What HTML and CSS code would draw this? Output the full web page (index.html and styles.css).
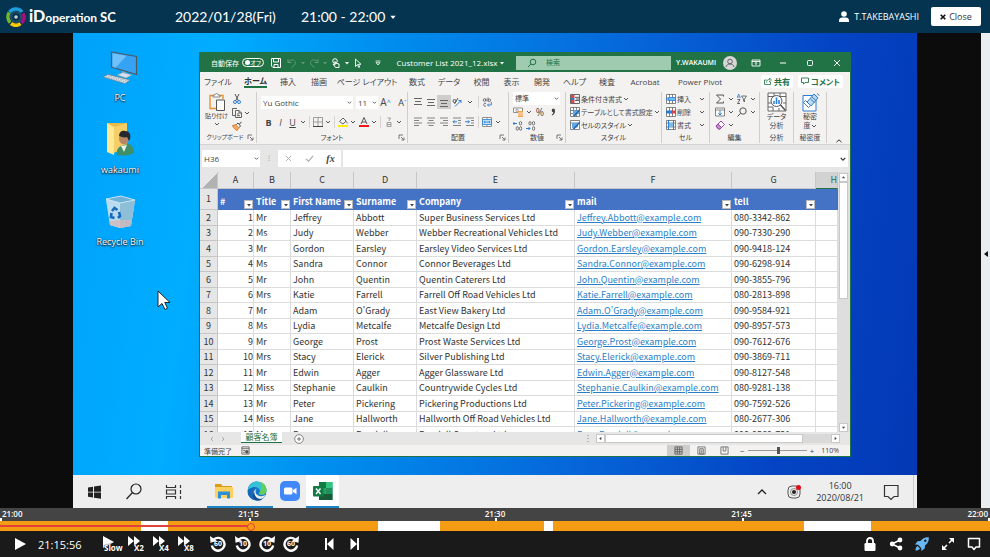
FILE: index.html
```html
<!DOCTYPE html>
<html lang="ja">
<head>
<meta charset="utf-8">
<title>iDoperation SC</title>
<link rel="stylesheet" href="styles.css">
</head>
<body>
<svg class="defs" aria-hidden="true">
  <symbol id="caret" viewBox="0 0 6 6"><path d="M1 2l2 2 2-2" fill="none" stroke="#555" stroke-width="1"/></symbol>
  <symbol id="launch" viewBox="0 0 7 7"><path d="M1 5V1h4M3 3l3 3M6 3.500V6H3.500" fill="none" stroke="#666" stroke-width=".9"/></symbol>
  <symbol id="tri" viewBox="0 0 6 6"><path d="M1 2h4L3 4.500z" fill="currentColor"/></symbol>
  <symbol id="rew" viewBox="0 0 16 16"><path d="M3.700 3.600A6.400 6.400 0 1 1 1.800 9.500" fill="none" stroke="#fff" stroke-width="2.400"/><path d="M0 0l.5 6.800L7 5z" fill="#fff"/></symbol>
  <symbol id="ffw" viewBox="0 0 12 12"><path d="M0 0l6 5-6 5zM6 0l6 5-6 5z" fill="#fff"/></symbol>
</svg>

<header class="appbar">
  <div class="brand">
    <svg viewBox="0 0 20 20" class="brand-mark" aria-hidden="true">
      <g fill="none" stroke-width="3.600"><path d="M3.500 5.200A8 8 0 0 1 12 2.300" stroke="#1da0dc"/><path d="M12 2.300A8 8 0 0 1 16 5" stroke="#1da0dc"/><path d="M17 6.500A8 8 0 0 1 15.500 16" stroke="#a4117f"/><path d="M14.500 16.600A8 8 0 0 1 5 16.500" stroke="#fcc800"/><path d="M4.200 15.500A8 8 0 0 1 3.300 5.600" stroke="#6fb92c"/></g>
      <circle cx="10" cy="10" r="5" fill="none" stroke="#1d4c66" stroke-width="2.500"/><circle cx="10" cy="10" r="1.800" fill="#c5d0d8"/>
    </svg>
    <h1><b>iD</b>operation <span>SC</span></h1>
  </div>
  <span class="when">2022/01/28(Fri)</span>
  <button class="range">21:00 - 22:00 <svg viewBox="0 0 6 6"><use href="#tri"/></svg></button>
  <div class="account">
    <svg viewBox="0 0 10 11" aria-hidden="true"><circle cx="5" cy="3" r="2.800" fill="#fff"/><path d="M0 11V9.500C0 7.500 1.500 6.500 3 6.500h4c1.500 0 3 1 3 3V11z" fill="#fff"/></svg>
    <span>T.TAKEBAYASHI</span>
    <button class="close"><svg viewBox="0 0 6 6" aria-hidden="true"><path d="M.7.7l4.600 4.600M5.300.7L.7 5.300" stroke="#111" stroke-width="1.600"/></svg>Close</button>
  </div>
</header>

<main class="stage">
  <section class="desktop">
    <div class="wallpaper">
      <ul class="shortcuts">
        <li><svg viewBox="0 0 36 36"><path d="M9.500 2l25 4.500v18L9.500 17z" fill="#35a2f4" stroke="#4d5a66" stroke-width="1.200"/><path d="M10.500 3.300l14 2.500-11 12-3-1z" fill="#6fc0fb"/><path d="M20 21l4 1.200v3l-4-1z" fill="#8da0ae"/><path d="M15 25l6-2.500 9 2.500-6 3z" fill="#d5e0e8" stroke="#8393a0" stroke-width=".5"/><path d="M1 27l5-2.500 22 5.500-5 3.500z" fill="#dde4ea" stroke="#71808c" stroke-width=".7"/><path d="M4 27l20 5M6 26l20 4.800" stroke="#8795a1" stroke-width=".7" stroke-dasharray="1.500 1"/></svg>PC</li>
        <li><svg viewBox="0 0 36 36"><path d="M5 1h20v29H9z" fill="#e9bb43"/><path d="M5 1l7 4v28l-7-3z" fill="#ffe793"/><path d="M12 5l13-4v20l-13 10z" fill="#f5cf66"/><path d="M15 33c-1-6 2-9 7-10l5-1c3 1 5 4 5 9-5 3-12 3-17 2z" fill="#3f8f68"/><path d="M19 24l3 6 3-7z" fill="#e9f1ea"/><ellipse cx="22" cy="16.500" rx="5" ry="6" fill="#b98663"/><path d="M17 14c0-4 3-6 6-5 5 0 7 5 4 10l-2-4c-3 1-5 0-8-1z" fill="#26282c"/></svg>wakaumi</li>
        <li><svg viewBox="0 0 36 36"><path d="M4 5l15-3 14 4-4 26-11 2-10-3z" fill="#a9d5ee"/><path d="M4 5l14 4 15-3-4 26-11 2-10-3z" fill="#bddcec" opacity=".8"/><path d="M18 9l15-3-4 26-11 2z" fill="#8ebfd9"/><path d="M4 5l15-3 14 4-15 3z" fill="#6fb2d9" stroke="#dbeef7" stroke-width=".8"/><path d="M8 27l10-1 11 0-1 6-10 2-10-3z" fill="#d3b9bb" opacity=".8"/><g fill="none" stroke="#1769bd" stroke-width="2.600"><path d="M10 17l2.500-3 3 2"/><path d="M17 18l1 4-2 2"/><path d="M12.500 24L9 23l.5-4"/></g></svg>Recycle Bin</li>
      </ul>
      <svg class="pointer" viewBox="0 0 14 21" aria-hidden="true"><path d="M1 1v16l4-3.500 3 6 2.500-1.200-2.700-5.800H13z" fill="#fff" stroke="#222" stroke-width="1"/></svg>

      <article class="excel">
        <div class="titlebar">
          <div class="quick">
            <label for="autosave">自動保存</label><span class="switch"><input type="checkbox" id="autosave"><i>オフ</i></span>
            <button aria-label="保存"><svg viewBox="0 0 10 10"><path d="M.5.500h9v9H2L.5 8zM2.500.500v3.500h5V.5M3 9.500V6.500h4v3" fill="none" stroke="#fff"/></svg></button>
            <div class="quick-grid">
              <button class="dim" aria-label="元に戻す"><svg viewBox="0 0 10 10"><path d="M1 1v3.500h3.500M1 4.500C3 1 8 1 8.500 4.500c0 2-2 3.500-4 5" fill="none" stroke="#5f9a78"/></svg><svg class="c" viewBox="0 0 6 6"><use href="#tri"/></svg></button>
              <button class="dim" aria-label="やり直し"><svg viewBox="0 0 10 10"><path d="M9 1v3.500H5.500M9 4.500C7 1 2 1 1.500 4.500c0 2 2 3.500 4 5" fill="none" stroke="#5f9a78"/></svg><svg class="c" viewBox="0 0 6 6"><use href="#tri"/></svg></button>
              <button aria-label="タッチ"><svg viewBox="0 0 10 10"><circle cx="4" cy="3" r="2.300" fill="none" stroke="#fff"/><path d="M4 3v4l-2-1 2.500 3.500H8V6L4 5" fill="none" stroke="#fff"/></svg><svg class="c" viewBox="0 0 6 6"><use href="#tri"/></svg></button>
              <button aria-label="選択"><svg viewBox="0 0 10 10"><path d="M2.500 1v7.500l2-2 1.200 3 1-.5-1.200-2.700H8z" fill="none" stroke="#fff" stroke-width=".9"/></svg></button>
              <button aria-label="カスタマイズ"><svg class="c" viewBox="0 0 6 6"><path d="M.5 1h5M1 2.700h4L3 5z" fill="none" stroke="#fff" stroke-width=".8"/></svg></button>
            </div>
          </div>
          <button class="docname">Customer List 2021_12.xlsx <svg class="c" viewBox="0 0 6 6"><use href="#tri"/></svg></button>
          <label class="find"><svg viewBox="0 0 10 10"><circle cx="6" cy="4" r="2.800" fill="none" stroke="#217346"/><path d="M4 6L1 9" stroke="#217346"/></svg><input type="search" aria-label="検索" placeholder="検索"></label>
          <div class="who">Y.WAKAUMI<svg viewBox="0 0 14 14"><circle cx="7" cy="7" r="7" fill="#d6d6d6"/><circle cx="7" cy="5.500" r="2.300" fill="none" stroke="#555" stroke-width=".9"/><path d="M3 11c.5-4 7.500-4 8 0" fill="none" stroke="#555" stroke-width=".9"/></svg></div>
          <div class="winbtns">
            <button aria-label="リボンの表示"><svg viewBox="0 0 10 10"><path d="M1 2h8v6H1zM1 3.500h8M5 7V4.500M4 5.500l1-1 1 1" fill="none" stroke="#fff" stroke-width=".9"/></svg></button>
            <button aria-label="最小化"><svg viewBox="0 0 10 10"><path d="M2 5h6" stroke="#fff"/></svg></button>
            <button aria-label="最大化"><svg viewBox="0 0 10 10"><rect x="2.500" y="2.500" width="5" height="5" rx="1" fill="none" stroke="#fff"/></svg></button>
            <button aria-label="閉じる"><svg viewBox="0 0 10 10"><path d="M2 2l6 6M8 2L2 8" stroke="#fff"/></svg></button>
          </div>
        </div>

        <nav class="tabs">
          <a href="#">ファイル</a><a href="#" class="on">ホーム</a><a href="#">挿入</a><a href="#">描画</a><a href="#">ページ レイアウト</a><a href="#">数式</a><a href="#">データ</a><a href="#">校閲</a><a href="#">表示</a><a href="#">開発</a><a href="#">ヘルプ</a><a href="#">検査</a><a href="#">Acrobat</a><a href="#">Power Pivot</a>
          <div class="share">
            <button><svg viewBox="0 0 8 8"><path d="M2.500 3H.5v4.500h6V5M2.500 5.500c0-2 1-3 3-3V1l2 2-2 2V3.800" fill="none" stroke="#217346" stroke-width=".8"/></svg>共有</button>
            <button><svg viewBox="0 0 8 8"><path d="M.5 1h7v4.500H4L2.500 7.200V5.500h-2z" fill="none" stroke="#217346" stroke-width=".9"/></svg>コメント</button>
          </div>
        </nav>

        <div class="ribbon">
          <section class="group">
            <div class="tools clip">
              <button class="tall"><svg viewBox="0 0 16 18"><path d="M4 2.500H1v13h6M11 2.500h3V6" fill="none" stroke="#e8912d" stroke-width="1.400"/><path d="M4 4V2h2c0-2 3-2 3 0h2v2z" fill="#fff" stroke="#777" stroke-width=".9"/><path d="M7.500 7h8v10.500h-8z" fill="#fff" stroke="#555"/></svg>貼り付け<svg class="c" viewBox="0 0 6 6"><use href="#caret"/></svg></button>
              <div class="stack">
                <button aria-label="切り取り"><svg viewBox="0 0 10 10"><path d="M3 0l3.500 7M7 0L3.500 7" stroke="#555" fill="none"/><circle cx="3" cy="8" r="1.500" fill="none" stroke="#2b7cd3"/><circle cx="7" cy="8" r="1.500" fill="none" stroke="#2b7cd3"/></svg></button>
                <button aria-label="コピー"><svg viewBox="0 0 10 10"><path d="M3 7.500H.5v-7H5M3.500 2.500H7l2.500 2.500v4.500h-6zM7 2.500V5h2.500M5 6h2M5 7.700h3" fill="none" stroke="#555" stroke-width=".9"/></svg><svg class="c" viewBox="0 0 6 6"><use href="#caret"/></svg></button>
                <button aria-label="書式のコピー"><svg viewBox="0 0 10 10"><path d="M.5 4.500l4-1 2.500 3-2 3c-1.500-1-3.500-2-4.500-5z" fill="#f8a860" stroke="#d9711c" stroke-width=".9"/><path d="M4.500 3.500L6 2l2.500 3L7 6.500M7.500 3L9.500.8" stroke="#444" fill="#fff"/></svg></button>
              </div>
            </div>
            <h2>クリップボード<svg class="l" viewBox="0 0 7 7"><use href="#launch"/></svg></h2>
          </section>
          <section class="group">
            <div class="tools rows">
              <div class="row pad4"><select class="face" aria-label="フォント"><option>Yu Gothic</option></select><select class="size" aria-label="フォント サイズ"><option>11</option></select><button class="grow">A<sup>^</sup></button><button class="grow small">A<sup>ˇ</sup></button></div>
              <div class="row pad7"><button class="t"><b>B</b></button><button class="t"><em>I</em></button><button class="t"><u>U</u></button><svg class="c" viewBox="0 0 6 6"><use href="#caret"/></svg><i class="bar"></i>
                <button aria-label="罫線"><svg viewBox="0 0 10 10"><path d="M.5.500h9v9h-9zM5 .5v9M.5 5h9" fill="none" stroke="#888" stroke-width=".8"/><path d="M0 9.500h10" stroke="#444"/></svg></button><svg class="c" viewBox="0 0 6 6"><use href="#caret"/></svg><i class="bar"></i>
                <button aria-label="塗りつぶし"><svg viewBox="0 0 10 10"><path d="M1.500 4.500L5 1l3 3-3 3zM8.500 4.500l.8 1.800" fill="none" stroke="#555" stroke-width=".9"/><path d="M0 8h10v2H0z" fill="#ffee00"/></svg></button><svg class="c" viewBox="0 0 6 6"><use href="#caret"/></svg>
                <button aria-label="文字の色"><svg viewBox="0 0 10 10"><path d="M2 7l3-6.500L8 7M3 5h4" fill="none" stroke="#555"/><path d="M0 8h10v2H0z" fill="#f01818"/></svg></button><svg class="c" viewBox="0 0 6 6"><use href="#caret"/></svg><i class="bar"></i>
                <button aria-label="ふりがな"><svg viewBox="0 0 10 10"><path d="M3.500 1h3L5 4M3 5.500h4M3 7.500h4M3 9.500h4M3 5.500v4M7 5.500v4" fill="none" stroke="#888" stroke-width=".8"/></svg></button><svg class="c" viewBox="0 0 6 6"><use href="#caret"/></svg>
              </div>
            </div>
            <h2>フォント<svg class="l" viewBox="0 0 7 7"><use href="#launch"/></svg></h2>
          </section>
          <section class="group">
            <div class="tools rows">
              <div class="row pad5 wide">
                <button aria-label="上揃え"><svg viewBox="0 0 10 10"><path d="M1 1.500h8M2 4.500h6M1 7.500h8" stroke="#666"/></svg></button>
                <button aria-label="上下中央揃え"><svg viewBox="0 0 10 10"><path d="M1 2.500h8M2 5.500h6M1 8.500h8" stroke="#666"/></svg></button>
                <button class="on" aria-label="下揃え"><svg viewBox="0 0 10 10"><path d="M1 3.500h8M2 6.500h6M1 9.500h8" stroke="#666"/></svg></button>
                <button aria-label="方向"><svg viewBox="0 0 10 10"><circle cx="2.500" cy="4" r="1.500" fill="none" stroke="#555"/><path d="M2.500 7L6 1" stroke="#555"/><path d="M3 9.500l6-6M9 6V3.500H6.500" fill="none" stroke="#2b7cd3"/></svg></button>
                <svg class="c w" viewBox="0 0 6 6"><use href="#caret"/></svg><i class="bar"></i>
                <button aria-label="折り返し"><svg viewBox="0 0 10 10"><circle cx="2.500" cy="3" r="1.300" fill="none" stroke="#555" stroke-width=".8"/><path d="M4 1.500v3M6 .5v4" stroke="#555" stroke-width=".8"/><circle cx="7.300" cy="3.300" r="1.300" fill="none" stroke="#555" stroke-width=".8"/><path d="M4 6.500a1.500 1.500 0 1 0 0 2.500" fill="none" stroke="#555" stroke-width=".8"/><path d="M9.300 5v3H5.500M7 6.500L5.500 8 7 9.500" fill="none" stroke="#2b7cd3" stroke-width=".9"/></svg></button>
              </div>
              <div class="row pad5 wide">
                <button aria-label="左揃え"><svg viewBox="0 0 10 10"><path d="M1 1h8M1 3.500h5M1 6h8M1 8.500h5" stroke="#777" stroke-width=".9"/></svg></button>
                <button aria-label="中央揃え"><svg viewBox="0 0 10 10"><path d="M1 1h8M2.500 3.500h5M1 6h8M2.500 8.500h5" stroke="#777" stroke-width=".9"/></svg></button>
                <button aria-label="右揃え"><svg viewBox="0 0 10 10"><path d="M1 1h8M4 3.500h5M1 6h8M4 8.500h5" stroke="#777" stroke-width=".9"/></svg></button>
                <button aria-label="インデントを減らす"><svg viewBox="0 0 10 10"><path d="M1 1h8M6 3.500h3M6 6h3M1 8.500h8" stroke="#777" stroke-width=".9"/><path d="M5 4.800H1M2.500 3.300L1 4.800l1.500 1.500" fill="none" stroke="#2b7cd3"/></svg></button>
                <button aria-label="インデントを増やす"><svg viewBox="0 0 10 10"><path d="M1 1h8M6 3.500h3M6 6h3M1 8.500h8" stroke="#777" stroke-width=".9"/><path d="M0 4.800h4M3 3.300l1.500 1.500L3 6.300" fill="none" stroke="#2b7cd3"/></svg></button>
                <i class="bar"></i>
                <button aria-label="セルを結合"><svg viewBox="0 0 10 10"><path d="M.5.500h9v9h-9zM5 .5v2M5 7.500v2" fill="#fff" stroke="#777" stroke-width=".8"/><path d="M.5 2.500h9v5h-9z" fill="#bfe0f8" stroke="#2b7cd3" stroke-width=".8"/><path d="M2 5h6M3 4L2 5l1 1M7 4l1 1-1 1" fill="none" stroke="#2b7cd3" stroke-width=".8"/></svg></button><svg class="c" viewBox="0 0 6 6"><use href="#caret"/></svg>
              </div>
            </div>
            <h2>配置<svg class="l" viewBox="0 0 7 7"><use href="#launch"/></svg></h2>
          </section>
          <section class="group">
            <div class="tools rows">
              <div class="row pad4"><select class="numfmt" aria-label="表示形式"><option>標準</option></select></div>
              <div class="row pad4 wide"><button aria-label="通貨"><svg viewBox="0 0 10 10"><path d="M.5 1h9v4.500h-9z" fill="#fff" stroke="#777" stroke-width=".8"/><circle cx="4" cy="3.300" r="1.200" fill="none" stroke="#777" stroke-width=".7"/><path d="M5 4h5v6H5z" fill="#f3a04d"/><path d="M5 6h5M5 8h5" stroke="#fff" stroke-width=".7"/></svg></button><svg class="c" viewBox="0 0 6 6"><use href="#caret"/></svg><button class="pct">%</button><button class="pct" aria-label="桁区切り"><svg viewBox="0 0 10 10"><path d="M5 1.500a2 2 0 0 1 2 2.500c0 2-1 3.500-3 4.500l-.3-.7C5 7 5.300 6 5.200 5.300A2 2 0 0 1 5 1.500z" fill="#444"/></svg></button></div>
              <div class="row pad4 wide"><button aria-label="小数点以下を増やす"><svg viewBox="0 0 10 10"><path d="M0 2.500h4M1.500 1L0 2.500 1.500 4" fill="none" stroke="#2b7cd3"/><g fill="none" stroke="#555" stroke-width=".8"><ellipse cx="7.500" cy="2.300" rx="1.200" ry="1.700"/><ellipse cx="4.300" cy="7.500" rx="1.100" ry="1.800"/><ellipse cx="7.600" cy="7.500" rx="1.100" ry="1.800"/></g></svg></button><button aria-label="小数点以下を減らす"><svg viewBox="0 0 10 10"><path d="M0 7.500h4M2.500 6L4 7.500 2.500 9" fill="none" stroke="#2b7cd3"/><g fill="none" stroke="#555" stroke-width=".8"><ellipse cx="4" cy="2.300" rx="1.100" ry="1.700"/><ellipse cx="7.500" cy="2.300" rx="1.200" ry="1.700"/><ellipse cx="7.600" cy="7.500" rx="1.100" ry="1.800"/></g></svg></button></div>
            </div>
            <h2>数値<svg class="l" viewBox="0 0 7 7"><use href="#launch"/></svg></h2>
          </section>
          <section class="group">
            <div class="tools rows text">
              <button><svg viewBox="0 0 10 10"><path d="M.5.500h9v9h-9z" fill="#fff" stroke="#666"/><path d="M1 1h3.500v3H1zM1 6h3.500v3H1z" fill="#e0454e"/><path d="M1 4h3.500v2H1z" fill="#2b7cd3"/><path d="M5 3.300h4M5 6.500h4M6 5h3" stroke="#444" stroke-width=".9"/></svg>条件付き書式<svg class="c" viewBox="0 0 6 6"><use href="#caret"/></svg></button>
              <button><svg viewBox="0 0 10 10"><path d="M.5.500h9v9h-9zM3.500.500v9M6.500.500v9M.5 3.500h9M.5 6.500h9" fill="#fff" stroke="#666" stroke-width=".8"/><path d="M3 3.500h6v3L5 9 3 8z" fill="#61a9e6"/><path d="M4 9l5.500-6" stroke="#2467a8" stroke-width="1.400"/></svg>テーブルとして書式設定<svg class="c" viewBox="0 0 6 6"><use href="#caret"/></svg></button>
              <button><svg viewBox="0 0 10 10"><path d="M.5.500h9v9h-9zM.5 3h9" fill="#fff" stroke="#666" stroke-width=".8"/><path d="M2 3h6v4L4 9 2 8z" fill="#61a9e6"/><path d="M3.500 9l6-6.500" stroke="#2467a8" stroke-width="1.400"/></svg>セルのスタイル<svg class="c" viewBox="0 0 6 6"><use href="#caret"/></svg></button>
            </div>
            <h2>スタイル</h2>
          </section>
          <section class="group">
            <div class="tools rows text">
              <button><svg viewBox="0 0 10 10"><path d="M.5.500h9v9h-9zM3.500.500v9M6.500.500v9" fill="#fff" stroke="#666" stroke-width=".8"/><path d="M2.500 3.500h7v3h-7z" fill="#73bdf0" stroke="#2b7cd3" stroke-width=".8"/><path d="M3 5H0M1.500 3.500L0 5l1.500 1.500" fill="none" stroke="#2b7cd3"/></svg>挿入<svg class="c end" viewBox="0 0 6 6"><use href="#caret"/></svg></button>
              <button><svg viewBox="0 0 10 10"><path d="M.5.500h9v9h-9zM3.500.500v9M6.500.500v9" fill="#fff" stroke="#666" stroke-width=".8"/><path d="M0 3.500h6v3H0z" fill="#2b7cd3"/><path d="M6 3l4 4M10 3L6 7" stroke="#e0353e" stroke-width="1.200"/></svg>削除<svg class="c end" viewBox="0 0 6 6"><use href="#caret"/></svg></button>
              <button><svg viewBox="0 0 10 10"><path d="M.5.500h9v9h-9zM.5 3h9M.5 7h9" fill="#fff" stroke="#666" stroke-width=".8"/><path d="M3 3h4v4H3z" fill="#73bdf0"/><path d="M2.500 0v10M7.500 0v10" stroke="#2b7cd3"/></svg>書式<svg class="c end" viewBox="0 0 6 6"><use href="#caret"/></svg></button>
            </div>
            <h2>セル</h2>
          </section>
          <section class="group">
            <div class="tools rows">
              <div class="row pad5 wide"><button aria-label="合計"><svg viewBox="0 0 10 10"><path d="M8.500 2.500V1h-7l4 4-4 4h7V7.500" fill="none" stroke="#555"/></svg></button><svg class="c" viewBox="0 0 6 6"><use href="#caret"/></svg><button aria-label="並べ替え"><svg viewBox="0 0 10 10"><path d="M0 4l1.700-4 1.700 4M.8 3h2" fill="none" stroke="#2b7cd3" stroke-width=".8"/><path d="M.5 5.500H3l-2.500 4H3" fill="none" stroke="#555" stroke-width=".9"/><path d="M4.500 2h5L7.500 5v3L6.500 7V5z" fill="none" stroke="#555" stroke-width=".8"/></svg></button><svg class="c" viewBox="0 0 6 6"><use href="#caret"/></svg></div>
              <div class="row pad5 wide"><button aria-label="フィル"><svg viewBox="0 0 10 10"><path d="M.5 1h9v8h-9zM.5 3h9" fill="#fff" stroke="#666" stroke-width=".8"/><path d="M5 3.500V8M3.300 6.300L5 8l1.700-1.700" fill="none" stroke="#2b7cd3"/></svg></button><svg class="c" viewBox="0 0 6 6"><use href="#caret"/></svg><button aria-label="検索と選択"><svg viewBox="0 0 10 10"><circle cx="6" cy="4" r="3.200" fill="none" stroke="#555"/><path d="M3.700 6.300L.5 9.500" stroke="#555"/></svg></button><svg class="c" viewBox="0 0 6 6"><use href="#caret"/></svg></div>
              <div class="row pad5 wide"><button aria-label="クリア"><svg viewBox="0 0 10 10"><path d="M1 6l5-5 3.500 3.500-4.500 4.500H3.500z" fill="#fff" stroke="#9b3fa8"/><path d="M1 6l2-2 3.500 3.500L5 9H3.500z" fill="#c98bd2" stroke="#9b3fa8"/></svg></button><svg class="c" viewBox="0 0 6 6"><use href="#caret"/></svg></div>
            </div>
            <h2>編集</h2>
          </section>
          <section class="group">
            <div class="tools"><button class="tall"><svg class="big" viewBox="0 0 20 20"><path d="M1 1h18v18H1zM1 4.500h18M7 1v3.500M13 1v3.500M1 11h3M1 15h5M6 15v4M12 16v3M16 11h3" fill="#fff" stroke="#666"/><circle cx="9.500" cy="9" r="5.500" fill="#f5fafe" stroke="#555"/><path d="M7 12V9M9.500 12V5.500M12 12V8" stroke="#2b7cd3" stroke-width="1.500"/><path d="M13.500 13l5 5.500" stroke="#555" stroke-width="1.500"/></svg><span>データ</span><span>分析</span></button></div>
            <h2>分析</h2>
          </section>
          <section class="group">
            <div class="tools"><button class="tall"><svg class="big" viewBox="0 0 20 20"><path d="M3 3.500h13V19H3z" fill="#fff" stroke="#2b7cd3"/><path d="M7 10l7-8 4 4-7 8z" fill="#bcdcf5" stroke="#2b7cd3"/><path d="M5.500 8.500l5 5-2 2-5-5zM12 5l4 3.500M10.500 7l4 3.500M17 1.500l2.500 2" stroke="#336fa8" stroke-width=".9" fill="#fff"/></svg><span>秘密</span><span>度<svg class="c" viewBox="0 0 6 6"><use href="#caret"/></svg></span></button></div>
            <h2>秘密度</h2>
          </section>
          <button class="fold" aria-label="リボンを折りたたむ"><svg class="c" viewBox="0 0 6 6"><path d="M.5 4.200L3 1.800l2.500 2.400" fill="none" stroke="#333"/></svg></button>
        </div>

        <div class="fbar">
          <select class="cellref" aria-label="名前ボックス"><option>H36</option></select>
          <span class="dots">⁝</span>
          <div class="fx"><button aria-label="キャンセル"><svg viewBox="0 0 10 10"><path d="M2 2l6 6M8 2L2 8" stroke="#aaa"/></svg></button><button aria-label="入力"><svg viewBox="0 0 10 10"><path d="M1 5.500L4 8l5-6" fill="none" stroke="#aaa" stroke-width="1.200"/></svg></button><button><em>fx</em></button></div>
          <div class="formula"><input type="text" aria-label="数式バー"><svg class="c" viewBox="0 0 6 6"><path d="M.7 1.800L3 4.200l2.300-2.400" fill="none" stroke="#333" stroke-width="1.200"/></svg></div>
        </div>

        <div class="sheet">
          <div class="grid">
            <table>
              <colgroup><col class="c0"><col class="ca"><col class="cb"><col class="cc"><col class="cc"><col class="ce"><col class="cf"><col class="cg"><col></colgroup>
              <thead><tr><th class="corner"></th><th>A</th><th>B</th><th>C</th><th>D</th><th>E</th><th>F</th><th>G</th><th class="cur">H</th></tr></thead>
              <tbody>
                <tr class="names"><th>1</th><td>#<button aria-label="#の絞り込み"><svg viewBox="0 0 6 6"><use href="#tri"/></svg></button></td><td>Title<button aria-label="Titleの絞り込み"><svg viewBox="0 0 6 6"><use href="#tri"/></svg></button></td><td>First Name<button aria-label="First Nameの絞り込み"><svg viewBox="0 0 6 6"><use href="#tri"/></svg></button></td><td>Surname<button aria-label="Surnameの絞り込み"><svg viewBox="0 0 6 6"><use href="#tri"/></svg></button></td><td>Company<button aria-label="Companyの絞り込み"><svg viewBox="0 0 6 6"><use href="#tri"/></svg></button></td><td>mail<button aria-label="mailの絞り込み"><svg viewBox="0 0 6 6"><use href="#tri"/></svg></button></td><td>tell<button aria-label="tellの絞り込み"><svg viewBox="0 0 6 6"><use href="#tri"/></svg></button></td><td></td></tr>
                <tr><th>2</th><td>1</td><td>Mr</td><td>Jeffrey</td><td>Abbott</td><td>Super Business Services Ltd</td><td><a href="#">Jeffrey.Abbott@example.com</a></td><td>080-3342-862</td><td></td></tr>
                <tr><th>3</th><td>2</td><td>Ms</td><td>Judy</td><td>Webber</td><td>Webber Recreational Vehicles Ltd</td><td><a href="#">Judy.Webber@example.com</a></td><td>090-7330-290</td><td></td></tr>
                <tr><th>4</th><td>3</td><td>Mr</td><td>Gordon</td><td>Earsley</td><td>Earsley Video Services Ltd</td><td><a href="#">Gordon.Earsley@example.com</a></td><td>090-9418-124</td><td></td></tr>
                <tr><th>5</th><td>4</td><td>Ms</td><td>Sandra</td><td>Connor</td><td>Connor Beverages Ltd</td><td><a href="#">Sandra.Connor@example.com</a></td><td>090-6298-914</td><td></td></tr>
                <tr><th>6</th><td>5</td><td>Mr</td><td>John</td><td>Quentin</td><td>Quentin Caterers Ltd</td><td><a href="#">John.Quentin@example.com</a></td><td>090-3855-796</td><td></td></tr>
                <tr><th>7</th><td>6</td><td>Mrs</td><td>Katie</td><td>Farrell</td><td>Farrell Off Road Vehicles Ltd</td><td><a href="#">Katie.Farrell@example.com</a></td><td>080-2813-898</td><td></td></tr>
                <tr><th>8</th><td>7</td><td>Mr</td><td>Adam</td><td>O'Grady</td><td>East View Bakery Ltd</td><td><a href="#">Adam.O'Grady@example.com</a></td><td>090-9584-921</td><td></td></tr>
                <tr><th>9</th><td>8</td><td>Ms</td><td>Lydia</td><td>Metcalfe</td><td>Metcalfe Design Ltd</td><td><a href="#">Lydia.Metcalfe@example.com</a></td><td>090-8957-573</td><td></td></tr>
                <tr><th>10</th><td>9</td><td>Mr</td><td>George</td><td>Prost</td><td>Prost Waste Services Ltd</td><td><a href="#">George.Prost@example.com</a></td><td>090-7612-676</td><td></td></tr>
                <tr><th>11</th><td>10</td><td>Mrs</td><td>Stacy</td><td>Elerick</td><td>Silver Publishing Ltd</td><td><a href="#">Stacy.Elerick@example.com</a></td><td>090-3869-711</td><td></td></tr>
                <tr><th>12</th><td>11</td><td>Mr</td><td>Edwin</td><td>Agger</td><td>Agger Glassware Ltd</td><td><a href="#">Edwin.Agger@example.com</a></td><td>090-8127-548</td><td></td></tr>
                <tr><th>13</th><td>12</td><td>Miss</td><td>Stephanie</td><td>Caulkin</td><td>Countrywide Cycles Ltd</td><td><a href="#">Stephanie.Caulkin@example.com</a></td><td>080-9281-138</td><td></td></tr>
                <tr><th>14</th><td>13</td><td>Mr</td><td>Peter</td><td>Pickering</td><td>Pickering Productions Ltd</td><td><a href="#">Peter.Pickering@example.com</a></td><td>090-7592-526</td><td></td></tr>
                <tr><th>15</th><td>14</td><td>Miss</td><td>Jane</td><td>Hallworth</td><td>Hallworth Off Road Vehicles Ltd</td><td><a href="#">Jane.Hallworth@example.com</a></td><td>080-2677-306</td><td></td></tr>
                <tr><th>16</th><td>15</td><td>Mr</td><td>Ross</td><td>Randall</td><td>Randall Counters Ltd</td><td><a href="#">Ross.Randall@example.com</a></td><td>090-9569-731</td><td></td></tr>
              </tbody>
            </table>
          </div>
          <div class="vscroll"><button aria-label="上へ"><svg viewBox="0 0 6 6"><path d="M1 4h4L3 1.500z" fill="#444"/></svg></button><i></i><button aria-label="下へ"><svg viewBox="0 0 6 6"><use href="#tri"/></svg></button></div>
        </div>

        <div class="sheetbar">
          <span class="steps"><svg viewBox="0 0 6 6"><path d="M4 1L2 3l2 2" fill="none" stroke="#aaa"/></svg><svg viewBox="0 0 6 6"><path d="M2 1l2 2-2 2" fill="none" stroke="#aaa"/></svg></span>
          <a class="sheettab" href="#">顧客名簿</a>
          <button class="add" aria-label="新しいシート"><svg viewBox="0 0 10 10"><circle cx="5" cy="5" r="4.300" fill="#fff" stroke="#777" stroke-width=".9"/><path d="M5 3v4M3 5h4" stroke="#666" stroke-width=".9"/></svg></button>
          <svg class="grip" viewBox="0 0 6 10"><path d="M3 1v1M3 4v1M3 7v1" stroke="#888"/></svg>
          <div class="hscroll"><button aria-label="左へ"><svg viewBox="0 0 6 6"><path d="M4 1v4L1.500 3z" fill="#444"/></svg></button><i></i><button aria-label="右へ"><svg viewBox="0 0 6 6"><path d="M2 1v4l2.500-2z" fill="#444"/></svg></button></div>
        </div>
        <footer class="status">
          <span>準備完了</span>
          <svg viewBox="0 0 10 10"><path d="M1 1h8v8H1zM1 3h8M2.500 5h2M2.500 7h2" fill="none" stroke="#555" stroke-width=".9"/><circle cx="6.500" cy="6.500" r="2" fill="#555"/></svg>
          <div class="views">
            <button class="on" aria-label="標準"><svg viewBox="0 0 10 10"><path d="M1 1h8v8H1zM1 3.700h8M1 6.300h8M3.700 1v8M6.300 1v8" fill="none" stroke="#555" stroke-width=".9"/></svg></button>
            <button aria-label="ページ レイアウト"><svg viewBox="0 0 10 10"><path d="M1 1h8v8H1zM3 3h4v6H3zM4 4.500h2M4 6h2M4 7.500h2" fill="none" stroke="#666" stroke-width=".9"/></svg></button>
            <button aria-label="改ページ"><svg viewBox="0 0 10 10"><path d="M1 1h8v8H1zM3.500 1v4.500h3V1" fill="none" stroke="#666" stroke-width=".9"/></svg></button>
          </div>
          <label class="zoom">−<input type="range" min="10" max="200" value="108" aria-label="ズーム">+</label>
          <output>110%</output>
        </footer>
      </article>
    </div>

    <div class="taskbar">
      <button aria-label="スタート"><svg viewBox="0 0 20 20"><path d="M4 5.500l5-.8v5H4zM10 4.500l7-1v6.200h-7zM4 10.500h5v5l-5-.8zM10 10.500h7v6.200l-7-1z" fill="#222"/></svg></button>
      <button aria-label="検索"><svg viewBox="0 0 20 20"><circle cx="12" cy="7" r="5" fill="none" stroke="#222" stroke-width="1.200"/><path d="M8.500 10.500L2.500 17" stroke="#222" stroke-width="1.200"/></svg></button>
      <button aria-label="タスク ビュー"><svg viewBox="0 0 20 20"><path d="M2.500 3v2.500h9V3M2.500 17v-2.500h9V17M2.500 8h9v4h-9zM16.500 3v3M16.500 8v4M16.500 14v3" fill="none" stroke="#333" stroke-width="1.200"/></svg></button>
      <div class="apps">
        <button class="run" aria-label="エクスプローラー"><svg viewBox="0 0 20 20"><path d="M1 3h6l1.500 2H18v4H1z" fill="#dc9a1c"/><path d="M1 6h18v11H1z" fill="#ffd260"/><path d="M4 17.500v-7h12v7h-3v-3.500H7v3.500z" fill="#2c8fd8"/></svg></button>
        <button class="run" aria-label="Edge"><svg viewBox="0 0 20 20"><circle cx="10" cy="10" r="9.500" fill="#1477c9"/><path d="M.7 8.500C2 3 6 .5 10 .5c5.500 0 9.500 4 9.500 8.500 0 3-2 4.700-5 4.700-2 0-3-1-2-2 1-1.500.5-4.700-3-5-3.500-.3-7 .300-8.800 1.800z" fill="#35c1d8"/><path d="M13 1c4 1 6.500 4.500 6.500 8s-2.500 4.700-5 4.700-3-1-2-2C14 10 15 5 13 1z" fill="#63cf5a"/><path d="M11 6.500C6 6 5 10 6 13c1 3.500 4 5.500 7 6-6 1.500-11-2-12.300-7C1 8 6 5 11 6.500z" fill="#1767b5"/><path d="M9.500 8c-2 2-1 6 3 7 2.500.7 4.500 0 6-1.200-1.500 3-4 4.500-6 4.800C6 17 5 10 9.500 8z" fill="#eee"/><path d="M7.500 11c-.5 5 4 8 8.500 6.500-2 2-4 2.200-6 2-4-1-5-6-2.500-8.500z" fill="#114b92"/></svg></button>
        <button aria-label="Zoom"><svg viewBox="0 0 20 20"><rect width="20" height="20" rx="5" fill="#4188fb"/><rect x="4" y="6.500" width="8.500" height="7" rx="1.500" fill="#fff"/><path d="M13 9l3.500-2.300v6.600L13 11z" fill="#fff"/></svg></button>
        <button class="run act" aria-label="Excel"><svg viewBox="0 0 20 20"><path d="M6 1h13.500v18H6z" fill="#21a366"/><path d="M6 1h7v6H6z" fill="#107c41"/><path d="M13 1h6.500v6H13z" fill="#33c481"/><path d="M6 13h13.500v6H6z" fill="#185c37"/><path d="M13 7h6.500v6H13z" fill="#21915b"/><rect y="5" width="10.500" height="10.500" rx="1" fill="#107c41"/><path d="M3 7.500l4.500 5.500M7.500 7.500L3 13" stroke="#fff" stroke-width="1.500"/></svg></button>
      </div>
      <div class="tray">
        <svg viewBox="0 0 20 20"><path d="M6 12l4-4 4 4" fill="none" stroke="#222" stroke-width="1.300"/></svg>
        <svg viewBox="0 0 20 20"><rect x="4" y="4" width="12" height="12" rx="4" fill="none" stroke="#555"/><circle cx="10" cy="10" r="3.500" fill="none" stroke="#777" stroke-width=".8"/><circle cx="10" cy="10" r="2" fill="#222"/><circle cx="14.500" cy="5.500" r="2.500" fill="#e00b14"/></svg>
        <time><span>16:00</span><span>2020/08/21</span></time>
        <svg viewBox="0 0 20 20"><path d="M3.500 3.500h13.500v11H13l-3 3-3-3H3.500z" fill="none" stroke="#333" stroke-width="1.200"/></svg>
      </div>
    </div>
  </section>
  <button class="drawer" aria-label="パネルを開く"><svg viewBox="0 0 4 6"><path d="M4 0v6L0 3z" fill="#111"/></svg></button>
</main>

<footer class="player">
  <div class="scale"><span>21:00</span><span>21:15</span><span>21:30</span><span>21:45</span><span>22:00</span></div>
  <div class="track">
    <i style="flex-grow:141"></i><i class="gap" style="flex-grow:27"></i><i style="flex-grow:210"></i><i class="gap" style="flex-grow:62"></i><i style="flex-grow:104"></i><i class="gap" style="flex-grow:9"></i><i style="flex-grow:251"></i><i class="gap" style="flex-grow:67"></i><i style="flex-grow:119"></i>
    <b class="played" style="width:25.500%"></b>
  </div>
  <div class="controls">
    <button class="play" aria-label="再生"><svg viewBox="0 0 12 12"><path d="M1 0l11 6-11 6z" fill="#fff"/></svg></button>
    <span class="now">21:15:56</span>
    <div class="speeds">
      <button><svg viewBox="0 0 12 12"><path d="M0 0l11 6-11 6z" fill="#fff"/></svg><b class="slow">Slow</b></button>
      <button><svg viewBox="0 0 12 12"><use href="#ffw"/></svg><b>X2</b></button>
      <button><svg viewBox="0 0 12 12"><use href="#ffw"/></svg><b>X4</b></button>
      <button><svg viewBox="0 0 12 12"><use href="#ffw"/></svg><b>X8</b></button>
    </div>
    <div class="jumps">
      <button><svg viewBox="0 0 16 16"><use href="#rew"/></svg><b>60</b></button>
      <button><svg viewBox="0 0 16 16"><use href="#rew"/></svg><b>10</b></button>
      <button class="fwd"><svg viewBox="0 0 16 16"><use href="#rew" transform="matrix(-1 0 0 1 16 0)"/></svg><b>10</b></button>
      <button class="fwd"><svg viewBox="0 0 16 16"><use href="#rew" transform="matrix(-1 0 0 1 16 0)"/></svg><b>60</b></button>
    </div>
    <div class="skips">
      <button aria-label="前へ"><svg viewBox="0 0 12 12"><path d="M2 0h2v12H2zM10.500 0v12L4 6z" fill="#fff"/></svg></button>
      <button aria-label="次へ"><svg viewBox="0 0 12 12"><path d="M8 0h2v12H8zM1.500 0v12L8 6z" fill="#fff"/></svg></button>
    </div>
    <div class="extras">
      <button aria-label="ロック"><svg viewBox="0 0 14 14"><path d="M4 7V4c0-4 6-4 6 0v3" fill="none" stroke="#fff" stroke-width="1.800"/><rect x="1.500" y="6" width="11" height="8" rx="1.200" fill="#fff"/></svg></button>
      <button aria-label="共有"><svg viewBox="0 0 14 14"><path d="M11 3L3 7l8 4" fill="none" stroke="#fff" stroke-width="1.600"/><circle cx="11" cy="3" r="2.400" fill="#fff"/><circle cx="3.200" cy="7" r="2.400" fill="#fff"/><circle cx="11" cy="11" r="2.400" fill="#fff"/></svg></button>
      <button aria-label="ロケット"><svg viewBox="0 0 14 14"><path d="M13.800.2C9.500 0 7.500 1.500 5.500 4L2.500 4.300 0 7.500l3 .300L6.200 11l.3 3 3.200-2.500.3-3C12.500 6.500 14 4.500 13.800.2z" fill="#66b8f7"/><path d="M2.500 9C1 10 .5 11.500.5 13.500 2.500 13.500 4 13 5 11.500z" fill="#66b8f7"/><circle cx="10.300" cy="3.700" r="1.200" fill="#1a1a1a"/></svg></button>
      <button aria-label="全画面"><svg viewBox="0 0 14 14"><path d="M8 6l4-4M6 8l-4 4" stroke="#fff" stroke-width="1.600"/><path d="M8 1h5v5zM1 8v5h5z" fill="#fff"/></svg></button>
      <button aria-label="コメント"><svg viewBox="0 0 14 14"><path d="M1.500 1.500h11v8.500H9L7 12.500 5 10H1.500z" fill="none" stroke="#fff" stroke-width="1.500" stroke-linejoin="round"/></svg></button>
    </div>
  </div>
</footer>
</body>
</html>
```
FILE: styles.css
```css
* { box-sizing: border-box; }

body {
  margin: 0;
  min-height: 100vh;
  display: flex;
  flex-direction: column;
  background: #0c0c0c;
  color: #fff;
  font-family: "Open Sans", "Noto Sans CJK JP", sans-serif;
  font-size: 10px;
}

button {
  display: inline-flex;
  align-items: center;
  justify-content: center;
  padding: 0;
  border: 0;
  background: none;
  color: inherit;
  font: inherit;
  white-space: nowrap;
}

h1, h2, ul { margin: 0; padding: 0; font-weight: 400; }
ul { list-style: none; }
a { color: inherit; text-decoration: none; }
svg { flex: none; display: block; }
select, input { font: inherit; color: inherit; border: 0; padding: 0; margin: 0; min-width: 0; border-radius: 0; }
select {
  appearance: none;
  background: #fff url("data:image/svg+xml,%3Csvg xmlns='http://www.w3.org/2000/svg' viewBox='0 0 6 6'%3E%3Cpath d='M1 2l2 2 2-2' fill='none' stroke='%23444'/%3E%3C/svg%3E") no-repeat right 1px center / 5px 5px;
}
.defs { position: absolute; width: 0; height: 0; }

/* Application bar */
.appbar {
  display: flex;
  align-items: center;
  height: 33px;
  padding: 0 9px 0 6px;
  background: #053450;
  font-family: Lato, sans-serif;
}
.brand { display: flex; align-items: center; gap: 3px; width: 169px; }
.brand-mark { width: 20px; height: 20px; }
.brand h1 { font-size: 12px; font-weight: 700; line-height: 20px; }
.brand b { font-size: 16px; font-weight: 900; }
.brand span { font-size: 13px; }
.when { width: 126px; font-size: 14px; }
.range { gap: 4px; font-size: 14px; }
.range svg { width: 8px; height: 8px; }
.account { display: flex; align-items: center; margin-left: auto; gap: 5px; font-family: "Open Sans", sans-serif; font-size: 9px; }
.account > svg { width: 10px; height: 11px; }
.close { gap: 3px; width: 50px; height: 19px; margin-left: 7px; border-radius: 2px; background: #fff; color: #333; }
.close svg { width: 6px; height: 6px; }

/* Recorded screen */
.stage { flex: 1; display: flex; }
.desktop { flex: 1; min-width: 0; display: flex; flex-direction: column; margin: 0 64px 0 73px; }
.wallpaper {
  position: relative;
  flex: 1;
  background: linear-gradient(98deg, #00a2fa 0%, #00adff 16%, #008ced 36%, #0666d9 62%, #0444c4 84%, #0338b4 100%);
}
.drawer { width: 9px; padding-bottom: 33px; background: #e9edf0; }
.drawer svg { width: 4px; height: 6px; }

.shortcuts { display: flex; flex-direction: column; gap: 17px; width: 94px; padding-top: 17px; }
.shortcuts li { display: flex; flex-direction: column; align-items: center; gap: 5px; font-size: 9px; line-height: 14px; text-shadow: 0 1px 2px #000, 0 0 1px #024; }
.shortcuts svg { width: 36px; height: 36px; }
.pointer { position: absolute; left: 84px; top: 257px; width: 14px; height: 21px; }

/* Spreadsheet window */
.excel {
  position: absolute;
  left: 126px;
  right: 66px;
  top: 19px;
  bottom: 18px;
  display: flex;
  flex-direction: column;
  border: 1px solid #217346;
  background: #f3f2f1;
  color: #444;
  font-size: 8px;
  font-feature-settings: "palt";
}
.c { width: 6px; height: 6px; }
.titlebar { display: grid; grid-template-columns: minmax(0, 186fr) minmax(0, 130fr) minmax(0, 155fr) minmax(0, 71fr) minmax(0, 108fr); align-items: center; height: 19px; background: #217346; color: #fff; }
.quick { display: flex; align-items: center; padding-left: 11px; font-size: 7px; }
.quick label { flex: none; width: 31px; }
.quick svg:not(.c) { width: 10px; height: 10px; }
.switch { position: relative; flex: none; display: flex; align-items: center; width: 22px; margin-right: 7px; }
.switch input { appearance: none; width: 22px; height: 9px; border: 1px solid #fff; border-radius: 5px; }
.switch input::before { content: ""; display: block; width: 5px; height: 5px; margin: 1px 2px; border-radius: 50%; background: #fff; }
.switch i { position: absolute; right: 3px; font-size: 6px; font-style: normal; }
.quick-grid { display: grid; grid-template-columns: repeat(4, 22px) 8px; margin-left: 6px; }
.quick-grid button { justify-content: flex-start; gap: 3px; }
.dim { color: #5f9a78; }
.docname { gap: 2px; }
.find { display: flex; align-items: center; gap: 9px; height: 14px; padding-left: 11px; background: #9fccb0; color: #217346; font-size: 7px; }
.find svg { width: 10px; height: 10px; }
.find input { flex: 1; background: none; }
.find input::placeholder { color: #217346; opacity: 1; }
.who { display: flex; align-items: center; justify-content: space-between; padding: 0 5px; font-size: 7px; font-weight: 600; }
.who svg { width: 14px; height: 14px; }
.winbtns { display: grid; grid-template-columns: repeat(4, 1fr); }
.winbtns svg { width: 10px; height: 10px; }

.tabs { display: grid; grid-template-columns: 36fr 39fr 26fr 36fr 60fr 40fr 24fr 41fr 19fr 42fr 23fr 42fr 34fr 76fr 112fr; align-items: center; height: 18px; }
.tabs a { display: flex; justify-content: center; white-space: nowrap; min-width: 0; }
.tabs a.on { justify-self: center; font-weight: 700; color: #333; border-bottom: 2px solid #217346; }
.share { display: flex; justify-content: flex-end; gap: 5px; padding-right: 7px; }
.share button { gap: 2px; height: 13px; padding: 0 3px; border-radius: 2px; background: #fff; color: #217346; font-weight: 700; }
.share svg { width: 8px; height: 8px; }

.ribbon { display: grid; grid-template-columns: 57fr 151fr 101fr 57fr 96fr 48fr 50fr 34fr 33fr 23fr; height: 55px; padding-top: 2px; border-bottom: 1px solid #d6d4d2; }
.group { display: flex; flex-direction: column; min-width: 0; border-right: 1px solid #d0cecc; margin-bottom: 2px; }
.group h2 { position: relative; height: 11px; font-size: 7px; line-height: 11px; text-align: center; white-space: nowrap; }
.group:first-child h2 { padding-right: 6px; font-size: 6px; }
.l { position: absolute; right: 2px; bottom: 2px; width: 7px; height: 7px; }
.tools { display: flex; height: 40px; }
.tools svg:not(.c):not(.big) { width: 10px; height: 10px; }
.clip { padding-left: 4px; gap: 3px; }
.tall { flex-direction: column; justify-content: flex-start; font-size: 7px; line-height: 9px; }
.clip .tall { width: 25px; font-size: 6px; }
.tools .tall svg:not(.c):not(.big) { width: 16px; height: 18px; margin: 1px 0; }
.tools > .tall:only-child { flex: 1; }
.tall span { display: flex; align-items: center; }
.big { width: 20px; height: 20px; }
.stack { display: flex; flex-direction: column; justify-content: space-between; align-items: flex-start; padding: 2px 0 1px; }
.stack button { gap: 2px; }
.rows { flex-direction: column; }
.row { flex: 1; display: flex; align-items: center; gap: 3px; }
.pad4 { padding-left: 4px; }
.pad5 { padding-left: 5px; }
.pad7 { padding-left: 7px; }
.row button { width: 9px; }
.row.wide button { width: 10px; }
.row .on { background: #cfcdcb; outline: 2px solid #cfcdcb; }
.w { width: 10px; }
.bar { width: 1px; height: 12px; background: #d6d4d2; }
.face, .size, .numfmt, .cellref { height: 13px; padding-left: 2px; }
.face { width: 92px; }
.size { width: 22px; }
.numfmt { width: 47px; font-size: 7px; }
.grow { font-size: 10px; }
.grow sup { font-size: 7px; color: #2b7cd3; }
.grow.small { font-size: 9px; margin-left: 5px; }
.t { font-size: 9px; }
.row .pct { width: 11px; font-size: 10px; }
.text { padding: 0 4px; }
.text button { flex: 1; justify-content: flex-start; gap: 1px; font-size: 7px; }
.text .end { margin-left: auto; }
.fold { align-self: end; justify-self: center; padding-bottom: 1px; }

.fbar { display: flex; align-items: center; height: 27px; padding: 0 2px; background: #e6e6e6; }
.fbar > * { height: 17px; }
.cellref { width: 58px; }
.dots { width: 18px; line-height: 16px; text-align: center; color: #999; }
.fx { display: grid; grid-template-columns: repeat(3, 1fr); width: 63px; margin-right: 2px; background: #fff; }
.fx svg { width: 9px; height: 9px; }
.fx em { font-family: "Liberation Serif", serif; font-size: 10px; font-weight: 700; }
.formula { flex: 1; display: flex; align-items: center; padding-right: 2px; background: #fff; }
.formula input { flex: 1; background: none; }

.sheet { flex: 1; min-height: 0; display: flex; overflow: hidden; background: #e6e6e6; }
.grid { flex: 1; min-width: 0; height: 0; min-height: 100%; overflow: hidden; }
.grid table { width: 100%; table-layout: fixed; border-collapse: separate; border-spacing: 0; font-family: "Noto Sans CJK JP", sans-serif; font-size: 9px; font-feature-settings: normal; line-height: 14px; color: #333; }
.c0 { width: 18px; } .ca { width: 36px; } .cb { width: 37px; } .cc { width: 63px; } .ce { width: 158px; } .cf { width: 157px; } .cg { width: 84px; }
.grid th, .grid td { padding: 0 0 0 2px; overflow: hidden; white-space: nowrap; text-align: left; border-right: 1px solid #dcdcdc; border-bottom: 1px solid #dcdcdc; background: #fff; }
.grid th { padding: 0; text-align: center; font-weight: 400; background: #e6e6e6; border-color: #c6c6c6; }
.grid tr { height: 15px; }
.grid tbody tr:nth-child(even) { height: 16px; }
.grid thead tr { height: 17px; }
.grid .corner { background: linear-gradient(135deg, transparent 55%, #b2b2b2 55%); }
.grid .cur { background: #d2d2d2; color: #217346; border-bottom-color: #217346; text-align: right; }
.grid tbody td:nth-child(2) { text-align: right; }
.grid td a { color: #2a7fc9; text-decoration: underline; }
.grid tbody .names { height: 21px; }
.grid tbody .names td { position: relative; padding-top: 6px; background: #4472c4; border-color: #4472c4; color: #fff; font-weight: 700; text-align: left; }
.names button { position: absolute; right: 0; bottom: 0; width: 9px; height: 9px; background: #fff; border: 1px solid #bbb; color: #444; }
.names svg { width: 6px; height: 6px; }

.vscroll { display: flex; flex-direction: column; width: 12px; padding: 1px 2px 0 1px; background: #dedede; }
.vscroll i { flex: 0 0 45%; background: #fff; border: 1px solid #c8c8c8; }
.vscroll button, .hscroll button { width: 9px; height: 9px; background: #fff; border: 1px solid #c8c8c8; color: #444; }
.vscroll button:last-child { margin-top: auto; }
.vscroll svg, .hscroll svg { width: 5px; height: 5px; }

.sheetbar { display: flex; align-items: center; height: 13px; padding-right: 10px; background: #e6e6e6; }
.steps { display: flex; gap: 5px; width: 41px; padding-left: 9px; }
.steps svg { width: 6px; height: 6px; }
.sheettab { width: 41px; align-self: flex-start; line-height: 10px; text-align: center; background: #fff; color: #217346; border-bottom: 1px solid #217346; }
.add { margin-left: 12px; }
.add svg { width: 10px; height: 10px; }
.grip { width: 6px; height: 10px; margin: 0 5px 0 auto; }
.hscroll { display: flex; width: 244px; background: #d9d9d9; }
.hscroll i { flex: 0 0 81%; background: #fff; border: 1px solid #c8c8c8; }
.hscroll button:last-child { margin-left: auto; }
.status { display: flex; align-items: center; height: 11px; padding: 0 11px 0 4px; font-size: 7px; }
.status span { width: 37px; }
.status svg { width: 9px; height: 9px; }
.views { display: flex; margin-left: auto; }
.views button { width: 23px; height: 11px; }
.views .on { background: #cfcdcb; }
.zoom { display: flex; align-items: center; gap: 3px; margin: 0 7px 0 4px; font-size: 8px; }
.zoom input { appearance: none; width: 59px; height: 1px; background: #999; }
.zoom input::-webkit-slider-thumb { appearance: none; width: 3px; height: 7px; background: #555; }

/* Recorded taskbar */
.taskbar { display: flex; height: 33px; padding-right: 3px; background: #eee; color: #333; }
.taskbar svg { width: 20px; height: 20px; }
.taskbar > button { width: 40px; }
.taskbar > button:first-child { width: 41px; }
.apps { display: flex; padding-left: 13px; }
.apps button { width: 33px; border-bottom: 2px solid transparent; }
.apps .run { border-color: #1f84c6; }
.apps .act { background: #fff; }
.tray { display: flex; align-items: center; gap: 12px; margin-left: auto; padding-right: 12px; border-right: 1px solid #ccc; }
.tray time { display: flex; flex-direction: column; align-items: center; font-size: 9px; line-height: 12px; }
.tray time + svg { margin-left: 5px; }

/* Player */
.scale { display: grid; grid-template-columns: 1fr 2fr 2fr 2fr 1fr; height: 13px; padding: 0 2px; background: #444; font-size: 8px; font-weight: 600; line-height: 12px; text-align: center; }
.scale span { position: relative; }
.scale span:first-child { text-align: left; }
.scale span:last-child { text-align: right; }
.scale span::after { content: ""; position: absolute; left: 50%; bottom: 0; width: 2px; height: 3px; background: #fff; }
.scale span:first-child::after { left: -2px; }
.scale span:last-child::after { left: 100%; }
.track { position: relative; display: flex; height: 10px; background: #f59c14; }
.track i { flex-basis: 0; }
.gap { background: #fff; }
.played { position: absolute; left: 0; top: 4px; height: 2px; background: #e0413a; }
.played::after { content: ""; position: absolute; right: -3px; top: -2px; width: 6px; height: 6px; border: 1px solid #e0413a; border-radius: 50%; background: #f59c14; }
.controls { display: flex; align-items: center; height: 26px; padding: 0 9px 0 14px; background: #1a1a1a; }
.controls svg { width: 12px; height: 12px; }
.now { width: 65px; margin-left: 12px; font-size: 11px; }
.speeds, .jumps, .skips, .extras { display: flex; }
.speeds button { position: relative; width: 25px; height: 16px; justify-content: flex-start; align-items: flex-start; }
.speeds b { position: absolute; left: 6px; bottom: 0; font-size: 8px; line-height: 8px; text-shadow: 0 0 1px #1a1a1a, 0 0 2px #1a1a1a; }
.speeds .slow { left: 1px; }
.jumps { gap: 9px; margin-left: 7px; }
.jumps button { position: relative; }
.jumps .fwd { margin-left: -1px; }
.jumps svg { width: 16px; height: 16px; }
.jumps b { position: absolute; inset: 0; font-size: 7px; line-height: 16px; text-align: center; }
.skips { gap: 14px; margin-left: 24px; }
.extras { gap: 12px; margin-left: auto; }
.extras svg { width: 14px; height: 14px; }
```
